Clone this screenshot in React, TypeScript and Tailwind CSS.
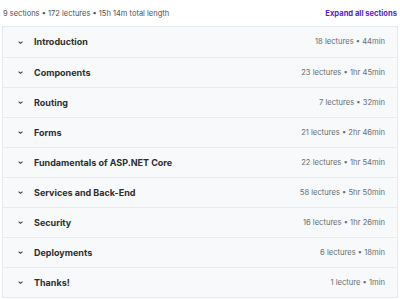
import React from "react";

const sections = [
  ["Introduction", "18 lectures • 44min"],
  ["Components", "23 lectures • 1hr 45min"],
  ["Routing", "7 lectures • 32min"],
  ["Forms", "21 lectures • 2hr 46min"],
  ["Fundamentals of ASP.NET Core", "22 lectures • 1hr 54min"],
  ["Services and Back-End", "58 lectures • 5hr 50min"],
  ["Security", "16 lectures • 1hr 26min"],
  ["Deployments", "6 lectures • 18min"],
  ["Thanks!", "1 lecture • 1min"],
];

function Chevron() {
  return (
    <svg width="7" height="7" viewBox="0 0 8 8" className="shrink-0">
      <path d="M1.8 3 L4 5 L6.2 3" fill="none" stroke="#3e4143" strokeWidth="1.2" />
    </svg>
  );
}

export default function App() {
  return (
    <div className="w-[400px] h-[299px] bg-white overflow-hidden" style={{ fontFamily: "Inter, 'Noto Sans', sans-serif" }}>
      <div className="flex items-center justify-between h-[26px] pl-[3px] pr-[3px] pt-[2px]">
        <span className="text-[7.5px] text-[#4d5155]">9 sections • 172 lectures • 15h 14m total length</span>
        <span className="text-[7.6px] font-bold text-[#5624d0]">Expand all sections</span>
      </div>
      <div className="mx-[2px] border border-[#e8ebee]">
        {sections.map(([t, m], i) => (
          <div
            key={t}
            className={`flex items-center justify-between h-[30px] bg-[#f7f9fa] pl-[14px] pr-[12px] ${i > 0 ? "border-t border-[#e8ebee]" : ""}`}
          >
            <div className="flex items-center gap-[10px]">
              <Chevron />
              <span className="text-[9px] font-bold text-[#2d2f31]">{t}</span>
            </div>
            <span className="text-[7.6px] text-[#6a6f73]">{m}</span>
          </div>
        ))}
      </div>
    </div>
  );
}
